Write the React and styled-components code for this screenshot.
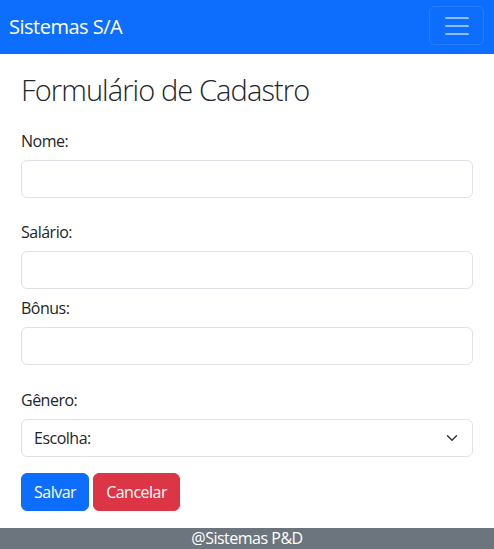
import styled, { createGlobalStyle } from 'styled-components';

const GlobalStyle = createGlobalStyle`
  html, body {
    margin: 0;
    padding: 0;
    overflow: hidden;
  }
  body {
    font-family: "Segoe UI", "Open Sans", "Noto Sans", sans-serif;
    font-size: 16px;
    letter-spacing: -0.5px;
    color: #212529;
    background: #fff;
  }
  * {
    box-sizing: border-box;
  }
`;

const Navbar = styled.nav`
  height: 54px;
  background-color: #0d6efd;
  display: flex;
  justify-content: space-between;
  align-items: flex-start;
  padding: 0 10px 0 9px;
`;

const Brand = styled.a`
  color: #fff;
  font-size: 20px;
  line-height: 54px;
  text-decoration: none;
`;

const Toggler = styled.button`
  margin-top: 6px;
  width: 55px;
  height: 39px;
  padding: 0;
  display: flex;
  align-items: center;
  justify-content: center;
  background: transparent;
  border: 1px solid rgba(255, 255, 255, 0.1);
  border-radius: 6px;
`;

const Main = styled.main`
  padding: 0 21px;
`;

const Title = styled.h1`
  margin: 18px 0 21px;
  font-size: 29px;
  font-weight: 300;
  line-height: 36px;
  letter-spacing: -0.9px;
`;

const Field = styled.div`
  margin-bottom: ${(p) => p.$gap}px;
`;

const Label = styled.label`
  display: block;
  line-height: 24px;
  margin-bottom: 7px;
`;

const Input = styled.input`
  display: block;
  width: 100%;
  height: 38px;
  padding: 6px 12px;
  font: inherit;
  border: 1px solid #dee2e6;
  border-radius: 6px;
  background: #fff;
`;

const Select = styled.select`
  display: block;
  width: 100%;
  height: 38px;
  padding: 6px 36px 6px 12px;
  font: inherit;
  letter-spacing: inherit;
  color: #212529;
  border: 1px solid #dee2e6;
  border-radius: 6px;
  appearance: none;
  background-color: #fff;
  background-image: url("data:image/svg+xml,%3csvg xmlns='http://www.w3.org/2000/svg' viewBox='0 0 16 16'%3e%3cpath fill='none' stroke='%23343a40' stroke-linecap='round' stroke-linejoin='round' stroke-width='2' d='m2 5 6 6 6-6'/%3e%3c/svg%3e");
  background-repeat: no-repeat;
  background-position: right 12px center;
  background-size: 16px 12px;
`;

const Actions = styled.div`
  display: flex;
  gap: 4px;
  margin-bottom: 17px;
`;

const Button = styled.button`
  height: 38px;
  padding: 0 12px;
  font: inherit;
  letter-spacing: inherit;
  color: #fff;
  background-color: ${(p) => (p.$variant === 'danger' ? '#dc3545' : '#0d6efd')};
  border: 1px solid ${(p) => (p.$variant === 'danger' ? '#dc3545' : '#0d6efd')};
  border-radius: 6px;
`;

const Footer = styled.footer`
  background-color: #6c757d;
  color: #fff;
  text-align: center;
  line-height: 21px;
  height: 21px;
`;

const MenuIcon = () => (
  <svg width="30" height="30" viewBox="0 0 30 30">
    <path
      stroke="rgba(255,255,255,0.55)"
      strokeLinecap="round"
      strokeMiterlimit="10"
      strokeWidth="2"
      d="M4 7h22M4 15h22M4 23h22"
    />
  </svg>
);

const App = () => {
  return (
    <>
      <GlobalStyle />
      <Navbar>
        <Brand href="#">Sistemas S/A</Brand>
        <Toggler aria-label="Menu">
          <MenuIcon />
        </Toggler>
      </Navbar>
      <Main>
        <Title>Formulário de Cadastro</Title>
        <Field $gap={22}>
          <Label>Nome:</Label>
          <Input type="text" />
        </Field>
        <Field $gap={7}>
          <Label>Salário:</Label>
          <Input type="text" />
        </Field>
        <Field $gap={23}>
          <Label>Bônus:</Label>
          <Input type="text" />
        </Field>
        <Field $gap={16}>
          <Label>Gênero:</Label>
          <Select defaultValue="">
            <option value="">Escolha:</option>
            <option value="m">Masculino</option>
            <option value="f">Feminino</option>
          </Select>
        </Field>
        <Actions>
          <Button>Salvar</Button>
          <Button $variant="danger">Cancelar</Button>
        </Actions>
      </Main>
      <Footer>@Sistemas P&amp;D</Footer>
    </>
  );
};

export default App;
